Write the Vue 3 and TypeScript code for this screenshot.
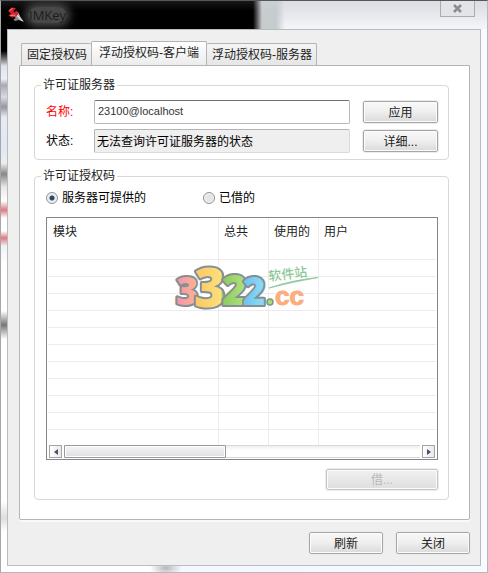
<script setup lang="ts">
import { ref } from 'vue'

const tabs = ['固定授权码', '浮动授权码-客户端', '浮动授权码-服务器']
const activeTab = ref(1)
const serverName = ref('23100@localhost')
const status = ref('无法查询许可证服务器的状态')
const source = ref<'server' | 'borrowed'>('server')
const columns = ['模块', '总共', '使用的', '用户']
const emptyRows = 12
</script>

<template>
  <div class="window">
    <header class="titlebar">
      <svg class="app-icon" width="16" height="16" viewBox="0 0 16 16" aria-hidden="true">
        <path d="M7 5 L10 5 L12.500 10 L16 15 L11 13 L6 9.500 Z" fill="#b9b9bd" />
        <path d="M8 7 L14.500 14" stroke="#fff" stroke-width="1" />
        <path d="M5.500 12.500 L9 10 L11 13 L7 14 Z" fill="#8a8a90" />
        <path d="M0 4 L3.500 0.500 L8 1 L5.500 4 L6.500 5.500 L8.500 3.500 L10.500 6.500 L8.500 9.500 L4 10.500 L0.500 8.500 L3 6.500 Z" fill="#d3222e" />
        <path d="M1.500 3.500 L4.500 1.500 M2.500 8.500 L7.500 8" stroke="#ff8f92" stroke-width="1" />
      </svg>
      <h1 class="title">IMKey</h1>
      <button class="close" type="button" aria-label="关闭窗口">
        <svg width="9" height="9" viewBox="0 0 9 9" aria-hidden="true">
          <path d="M1 1 L8 8 M8 1 L1 8" stroke="#8b8d90" stroke-width="2.600" />
        </svg>
      </button>
    </header>

    <main class="client">
      <div class="tabs" role="tablist">
        <button
          v-for="(tab, i) in tabs"
          :key="tab"
          class="tab"
          :class="{ active: i === activeTab }"
          type="button"
          role="tab"
          :aria-selected="i === activeTab"
          @click="activeTab = i"
        >{{ tab }}</button>
      </div>

      <section class="panel" role="tabpanel">
        <fieldset class="group">
          <legend>许可证服务器</legend>
          <div class="server">
            <div class="row">
              <label class="name required" for="server-name">名称:</label>
              <input id="server-name" v-model="serverName" class="field" type="text" />
              <button class="button" type="button">应用</button>
            </div>
            <div class="row">
              <label class="name" for="server-status">状态:</label>
              <input id="server-status" class="field readonly" type="text" :value="status" readonly />
              <button class="button" type="button">详细...</button>
            </div>
          </div>
        </fieldset>

        <fieldset class="group codes">
          <legend>许可证授权码</legend>
          <div class="codes-body">
            <div class="options">
              <label class="option"><input v-model="source" type="radio" name="source" value="server" />服务器可提供的</label>
              <label class="option"><input v-model="source" type="radio" name="source" value="borrowed" />已借的</label>
            </div>

            <div class="list">
              <div class="list-view">
                <table>
                  <colgroup>
                    <col class="col-module" />
                    <col class="col-count" />
                    <col class="col-count" />
                    <col />
                  </colgroup>
                  <thead>
                    <tr><th v-for="c in columns" :key="c" scope="col">{{ c }}</th></tr>
                  </thead>
                  <tbody>
                    <tr v-for="r in emptyRows" :key="r"><td v-for="c in columns" :key="c"></td></tr>
                  </tbody>
                </table>
              </div>
              <div class="scrollbar">
                <button class="arrow" type="button" aria-label="向左滚动">
                  <svg width="4" height="6" viewBox="0 0 4 6" aria-hidden="true"><path d="M4 0 V6 L0 3 Z" fill="#4c4f66" /></svg>
                </button>
                <div class="track"><div class="thumb"></div></div>
                <button class="arrow" type="button" aria-label="向右滚动">
                  <svg width="4" height="6" viewBox="0 0 4 6" aria-hidden="true"><path d="M0 0 V6 L4 3 Z" fill="#4c4f66" /></svg>
                </button>
              </div>

              <svg class="watermark" width="150" height="56" viewBox="0 0 150 56" role="img" aria-label="3322.cc 软件站">
                <defs>
                  <linearGradient id="digit-fill" gradientUnits="userSpaceOnUse" x1="0" y1="0" x2="92" y2="0">
                    <stop offset="0" stop-color="#f58fb2" />
                    <stop offset="0.240" stop-color="#fbb091" />
                    <stop offset="0.250" stop-color="#fbc864" />
                    <stop offset="0.520" stop-color="#fbe07a" />
                    <stop offset="0.540" stop-color="#8bcb62" />
                    <stop offset="0.760" stop-color="#ace077" />
                    <stop offset="0.790" stop-color="#6cc6f0" />
                    <stop offset="1" stop-color="#91dcf8" />
                  </linearGradient>
                </defs>
                <text class="digits" fill="url(#digit-fill)"><tspan x="3" y="45" font-size="38">3</tspan><tspan x="21" y="47" font-size="54">3</tspan><tspan x="49" y="45" font-size="43">2</tspan><tspan x="70" y="45" font-size="38">2</tspan></text>
                <circle cx="97" cy="42" r="3" fill="#a5dc76" stroke="#83938b" stroke-width="1.500" />
                <text class="suffix" x="102" y="45" font-size="26">cc</text>
                <text class="site" x="96" y="21" font-size="13" transform="rotate(-7 96 21)">软件站</text>
                <path d="M96 28 Q119 20 145 17.500 Q119 22 96 28 Z" fill="#8cc796" stroke="#8cc796" stroke-width="0.800" />
              </svg>
            </div>

            <button class="button borrow" type="button" disabled>借...</button>
          </div>
        </fieldset>
      </section>

      <footer class="actions">
        <button class="button" type="button">刷新</button>
        <button class="button" type="button">关闭</button>
      </footer>
    </main>
  </div>
</template>

<style>
body {
  margin: 0;
}
</style>

<style scoped>
.window,
.window * {
  box-sizing: border-box;
}

.window {
  display: flex;
  flex-direction: column;
  min-height: 100vh;
  padding: 0 6px 6px;
  border: 1px solid #b5b7b9;
  border-top-color: #55585b;
  border-left-color: #a5a7a9;
  font: 12px/16px "Liberation Sans", "Noto Sans CJK SC", sans-serif;
  color: #222;
  background:
    radial-gradient(ellipse 16px 8px at 165px calc(100% - 4px), #b4b7ba, transparent) no-repeat,
    linear-gradient(180deg, #000 0, #000 50px, #666 57px, #dfe1ee 65px, #eceef8 78px, #a9a9b5 84px, #d9dae4 96px, #96969f 106px, #e6ebf5 116px, #e0e8f5 150px, #eee 162px, #888 173px, #e8e8e8 186px, #fff 200px, #e07880 209px, #fff 217px, #fff 230px, #e07880 237px, #eff3f4 245px, #fff 265px, #fff 310px, #777 324px, #fff 338px, #fff 500px, #ddd 517px, #fff 530px) left top / 8px 100% no-repeat,
    linear-gradient(90deg, #fff 0, #fff 170px, #f4f8ff 180px, #f7faff 100%);
}

.titlebar {
  display: flex;
  align-items: center;
  height: 28px;
  margin: 0 -6px;
  padding-left: 7px;
  background:
    linear-gradient(180deg, rgba(255, 255, 255, 0.09), transparent 10px),
    linear-gradient(90deg, #000 0, #000 252px, #555 256px, #c9cccf 261px, #c5cbce 275px, transparent 284px),
    linear-gradient(180deg, #d9dbe0, #f4f6fa);
}

.app-icon {
  flex: none;
}

.title {
  margin: 0 0 0 5px;
  font: 13px/16px "Open Sans", sans-serif;
  color: #1d1d1d;
  background: #484848;
  border-radius: 8px;
  box-shadow: 0 0 9px 4px #484848;
}

.close {
  align-self: flex-start;
  display: flex;
  align-items: center;
  justify-content: center;
  width: 35px;
  height: 16px;
  margin: 0 12px 0 auto;
  padding: 0;
  border: 1px solid #aaacb0;
  border-top: 0;
  background: #e3e4e8;
}

.client {
  flex: 1;
  display: flex;
  flex-direction: column;
  padding: 11px 10px 11px 11px;
  border: 1px solid #b9bbbd;
  background: #efefef;
}

.tabs {
  display: flex;
  align-items: flex-end;
  height: 24px;
  padding-left: 2px;
}

.tab {
  height: 22px;
  padding: 0 4px 0 5px;
  border: 1px solid #b4b4b4;
  border-right-width: 0;
  border-bottom: 0;
  border-radius: 2px 2px 0 0;
  font: inherit;
  color: #222;
  background: linear-gradient(#f4f4f4, #e6e6e6);
  white-space: nowrap;
}

.tab:last-child {
  border-left-width: 0;
  border-right-width: 1px;
}

.tab.active {
  height: 24px;
  padding: 0 7px 2px;
  border-right-width: 1px;
  background: linear-gradient(#fff, #ececec);
}

.panel {
  flex: 1;
  display: flex;
  flex-direction: column;
  gap: 8px;
  padding: 11px 20px 19px 14px;
  border: 1px solid #b2b4b6;
  border-radius: 0 0 2px 2px;
  background: #fff;
  box-shadow: 0 2px 0 #f9f9f9;
}

.group {
  min-width: 0;
  margin: 0;
  padding: 0;
  border: 1px solid #d8d8d8;
  border-radius: 4px;
}

.group legend {
  height: 16px;
  margin-left: 6px;
  padding: 0 2px;
}

.server {
  display: flex;
  flex-direction: column;
  gap: 5px;
  padding: 7px 10px 6px 11px;
}

.row {
  display: flex;
  align-items: center;
  height: 24px;
}

.name {
  width: 48px;
  color: #000;
}

.required {
  color: #f00;
}

.field {
  flex: 1;
  min-width: 0;
  height: 24px;
  margin-right: 13px;
  padding: 0 3px 2px;
  border: 1px solid #b9b9b9;
  border-top-color: #6f6f6f;
  border-radius: 2px;
  outline: 0;
  font: 11px/16px "Liberation Sans", "Noto Sans CJK SC", sans-serif;
  color: #333;
  background: #fff;
}

.readonly {
  padding: 0 2px 2px;
  border-color: #b4b4b4 #dadada #dadada #b4b4b4;
  font-size: 12px;
  color: #000;
  background: #efefef;
}

.button {
  width: 75px;
  height: 22px;
  padding: 1px 0 0;
  border: 1px solid #a5a5a5;
  border-radius: 2px;
  outline: 1px solid #ececec;
  font: inherit;
  color: #222;
  background: linear-gradient(#f8f8f8, #f0f0f0 45%, #dadada);
  box-shadow: inset 0 0 0 1px #fbfbfb;
}

.codes {
  flex: 1;
  display: flex;
  flex-direction: column;
}

.codes-body {
  flex: 1;
  display: flex;
  flex-direction: column;
  padding: 6px 10px 8px 11px;
}

.options {
  display: flex;
  margin-bottom: 11px;
  color: #000;
}

.option {
  display: flex;
  align-items: center;
  gap: 4px;
  width: 157px;
  height: 16px;
}

.option input {
  appearance: none;
  width: 12px;
  height: 12px;
  margin: 0;
  border: 1px solid #8f9193;
  border-radius: 50%;
  background: #e6e6e6;
  box-shadow: inset 0 0 0 1px #f7f7f7;
}

.option input:checked {
  background: radial-gradient(circle, #2d4a63 0, #2d4a63 2px, #e6e8ea 3px);
}

.list {
  position: relative;
  flex: 1;
  display: flex;
  flex-direction: column;
  padding: 0 1px 1px;
  border: 1px solid #83868b;
  background: #fff;
}

.list-view {
  flex: 1;
  overflow: hidden;
}

table {
  width: 100%;
  table-layout: fixed;
  border-collapse: separate;
  border-spacing: 0;
}

.col-module {
  width: 171px;
}

.col-count {
  width: 50px;
}

th {
  height: 25px;
  padding: 2px 0 0 5px;
  border-right: 1px solid #ececec;
  font-weight: normal;
  text-align: left;
}

td {
  height: 17px;
  padding: 0;
  border-right: 1px solid #ececec;
  border-bottom: 1px solid #ececec;
}

th:last-child,
td:last-child {
  border-right: 0;
}

tbody tr:last-child td {
  height: 15px;
  border-bottom: 0;
}

.scrollbar {
  display: flex;
  gap: 2px;
  height: 13px;
  margin: 0 1px;
}

.arrow {
  display: flex;
  align-items: center;
  justify-content: center;
  width: 13px;
  height: 13px;
  padding: 0;
  border: 1px solid #a2a4a6;
  background: linear-gradient(90deg, #fff, #e9e9ec);
}

.track {
  flex: 1;
  border: 1px solid #d9d9d9;
  border-width: 1px 0;
  background: linear-gradient(#efefef, #fff 40%);
}

.thumb {
  width: 162px;
  height: 13px;
  margin-top: -1px;
  border: 1px solid #97999b;
  border-radius: 1px;
  background: linear-gradient(#f5f5f5, #eaeaec 50%, #dedfe1);
  box-shadow: inset 0 0 0 1px #fff;
}

.watermark {
  position: absolute;
  top: 42px;
  left: 126px;
}

.digits {
  font-family: "Open Sans", sans-serif;
  font-weight: 800;
  stroke: #858e93;
  stroke-width: 4px;
  stroke-linejoin: round;
  paint-order: stroke;
}

.suffix {
  font-family: "Liberation Sans", sans-serif;
  font-weight: 700;
  fill: #faad7d;
  stroke: #faad7d;
  stroke-width: 1px;
}

.site {
  font-family: "Noto Sans CJK SC", sans-serif;
  font-weight: 500;
  fill: #8cc796;
}

.borrow {
  align-self: flex-end;
  width: 112px;
  height: 21px;
  margin-top: 9px;
  border-color: #c4c4c4;
  color: #b9b9b9;
  background: linear-gradient(#f1f1f1, #dedede);
}

.actions {
  display: flex;
  justify-content: flex-end;
  gap: 13px;
  padding-top: 12px;
}

.actions .button {
  width: 74px;
}
</style>
